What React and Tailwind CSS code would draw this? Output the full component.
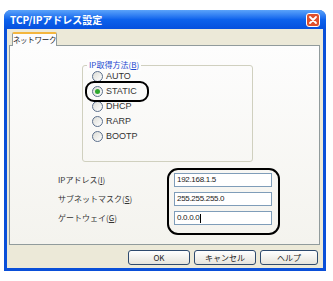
import React from 'react';

const radios = ['AUTO', 'STATIC', 'DHCP', 'RARP', 'BOOTP'];

const fields = [
  { label: 'IPアドレス(', key: 'I', value: '192.168.1.5' },
  { label: 'サブネットマスク(', key: 'S', value: '255.255.255.0' },
  { label: 'ゲートウェイ(', key: 'G', value: '0.0.0.0' },
];

const jp = 'font-["Noto_Sans_CJK_JP",sans-serif]';

function Radio({ label, checked }) {
  return (
    <div className="h-[15px] flex items-center gap-[3px]">
      <span className="w-[11px] h-[11px] rounded-full border border-[#5b6f8c] bg-gradient-to-br from-[#dcdcd6] to-white flex items-center justify-center">
        {checked && <span className="w-[5px] h-[5px] rounded-full bg-[#2fa82f]" />}
      </span>
      <span className="text-[9px] leading-none text-[#333] font-['Liberation_Sans',sans-serif]">{label}</span>
    </div>
  );
}

function Button({ children, width }) {
  return (
    <button
      className={`${width} h-[15px] rounded-[3px] border border-[#2e4a6e] bg-gradient-to-b from-white to-[#e6e4dc] text-[8px] leading-none text-[#222] ${jp}`}
    >
      {children}
    </button>
  );
}

export default function App() {
  return (
    <div className="w-[333px] h-[281px] bg-white pt-[10px] pl-[4px]">
      <div className="w-[322px] h-[261px] rounded-t-[7px] bg-[#0a4fd8] flex flex-col px-[3px] pb-[3px]">
        {/* title bar */}
        <div className="h-[19px] -mx-[3px] px-[6px] rounded-t-[7px] bg-gradient-to-b from-[#5aa3fa] via-[#0d62ec] to-[#0650de] flex items-center justify-between">
          <span className={`text-[10px] font-bold text-white leading-none ${jp}`}>TCP/IPアドレス設定</span>
          <svg width="14" height="14" viewBox="0 0 14 14" className="shrink-0">
            <rect x="0.5" y="0.5" width="13" height="13" rx="2.5" fill="#e0502c" stroke="#ffffff" />
            <path d="M4 4L10 10M10 4L4 10" stroke="#ffffff" strokeWidth="1.8" strokeLinecap="round" />
          </svg>
        </div>

        {/* body */}
        <div className="flex-1 bg-[#ece9d8] flex flex-col pt-[3px] pl-[2px] pr-[3px]">
          <div className="flex pl-[3px] relative z-10">
            <div className={`h-[14px] w-[45px] border border-[#919b9c] border-b-0 border-t-2 border-t-[#f4b63e] rounded-t-[2px] bg-[#fcfcfe] flex items-center justify-center whitespace-nowrap text-[7.5px] tracking-[-0.3px] leading-none text-[#222] ${jp}`}>
              ネットワーク
            </div>
          </div>
          <div className="relative -mt-[1px] h-[200px] border border-[#919b9c] bg-gradient-to-b from-[#fdfdfd] to-[#f4f3ee] flex flex-col">
            {/* group box */}
            <div className="relative mt-[19px] ml-[72px] w-[171px] h-[97px] border border-[#d0d0bf] rounded-[3px] pt-[3px] pl-[9px]">
              <span className={`absolute -top-[7px] left-[4px] px-[2px] bg-[#fdfdfd] text-[8px] leading-[12px] text-[#1c48d0] ${jp}`}>
                IP取得方法(<span className="underline">B</span>)
              </span>
              {radios.map((r) => (
                <Radio key={r} label={r} checked={r === 'STATIC'} />
              ))}
            </div>

            {/* address fields */}
            <div className="mt-[11px] pl-[48px] flex flex-col gap-[5px]">
              {fields.map((f) => (
                <div key={f.key} className="flex items-center">
                  <span className={`w-[116px] text-[8px] leading-none text-[#333] ${jp}`}>
                    {f.label}
                    <span className="underline">{f.key}</span>)
                  </span>
                  <div className="w-[98px] h-[14px] border border-[#7f9db9] bg-white flex items-center px-[2px] text-[8px] leading-none text-[#222] font-['Liberation_Sans',sans-serif] tracking-[-0.3px]">
                    {f.value}
                    {f.key === 'G' && <span className="w-px h-[9px] bg-black ml-[1px]" />}
                  </div>
                </div>
              ))}
            </div>

            {/* annotation marks */}
            <div className="absolute left-[75px] top-[35px] w-[64px] h-[21px] border-2 border-black rounded-[9px]" />
            <div className="absolute left-[157px] top-[122px] w-[113px] h-[67px] border-2 border-black rounded-[11px]" />
          </div>

          <div className="mt-[5px] flex justify-end gap-[4px] pr-[2px]">
            <Button width="w-[62px]">OK</Button>
            <Button width="w-[62px]">キャンセル</Button>
            <Button width="w-[58px]">ヘルプ</Button>
          </div>
        </div>
      </div>
    </div>
  );
}
